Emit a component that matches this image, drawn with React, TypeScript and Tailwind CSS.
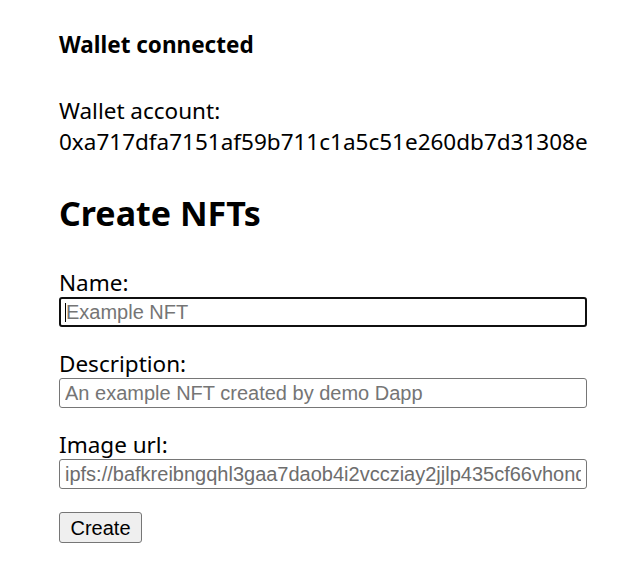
import { useState } from 'react';

const fields = [
  { id: 'name', label: 'Name:', placeholder: 'Example NFT', value: '' },
  { id: 'description', label: 'Description:', placeholder: 'An example NFT created by demo Dapp', value: '' },
  {
    id: 'image',
    label: 'Image url:',
    placeholder: '',
    value: 'ipfs://bafkreibngqhl3gaa7daob4i2vccziay2jjlp435cf66vhonqzr4fajx3pu',
  },
];

/**
 * Mint form shown once a wallet is connected.
 */
export default function App() {
  const [values, setValues] = useState<Record<string, string>>(
    Object.fromEntries(fields.map((f) => [f.id, f.value])),
  );
  const account = '0xa717dfa7151af59b711c1a5c51e260db7d31308e';

  return (
    <div className="min-h-[588px] bg-white px-[59px] pt-[31px] text-black font-['Noto_Sans',sans-serif] text-[22.5px]">
      <p className="font-bold leading-[28px]">Wallet connected</p>

      <div className="mt-[36px] leading-[31px]">
        <p>Wallet account:</p>
        <p>{account}</p>
      </div>

      <h2 className="mt-[36px] text-[34px] font-bold leading-[40px]">Create NFTs</h2>

      <form className="mt-[36px] flex flex-col" onSubmit={(e) => e.preventDefault()}>
        {fields.map((f, i) => (
          <div key={f.id} className={`flex flex-col ${i > 0 ? 'mt-[23px]' : ''}`}>
            <label htmlFor={f.id} className="leading-[28px]">
              {f.label}
            </label>
            <div className="relative">
              <input
                id={f.id}
                value={values[f.id]}
                placeholder={f.placeholder}
                onChange={(e) => setValues({ ...values, [f.id]: e.target.value })}
                className={`block h-[30px] w-[528px] rounded-[3px] bg-white px-[5px] font-['Liberation_Sans',Arial,sans-serif] text-[20px] text-[#6d6d6d] placeholder:text-[#757575] outline-none ${
                  i === 0 ? 'border-2 border-[#101010] px-[4px]' : 'border border-[#767676]'
                }`}
              />
              {i === 0 && <span className="absolute left-[6px] top-[6px] h-[19px] w-px bg-black" />}
            </div>
          </div>
        ))}

        <div className="mt-[23px]">
          <button
            type="submit"
            className="block h-[31px] w-[83px] rounded-[3px] border border-[#767676] bg-[#efefef] font-['Liberation_Sans',Arial,sans-serif] text-[20px] leading-none text-black"
          >
            Create
          </button>
        </div>
      </form>
    </div>
  );
}
